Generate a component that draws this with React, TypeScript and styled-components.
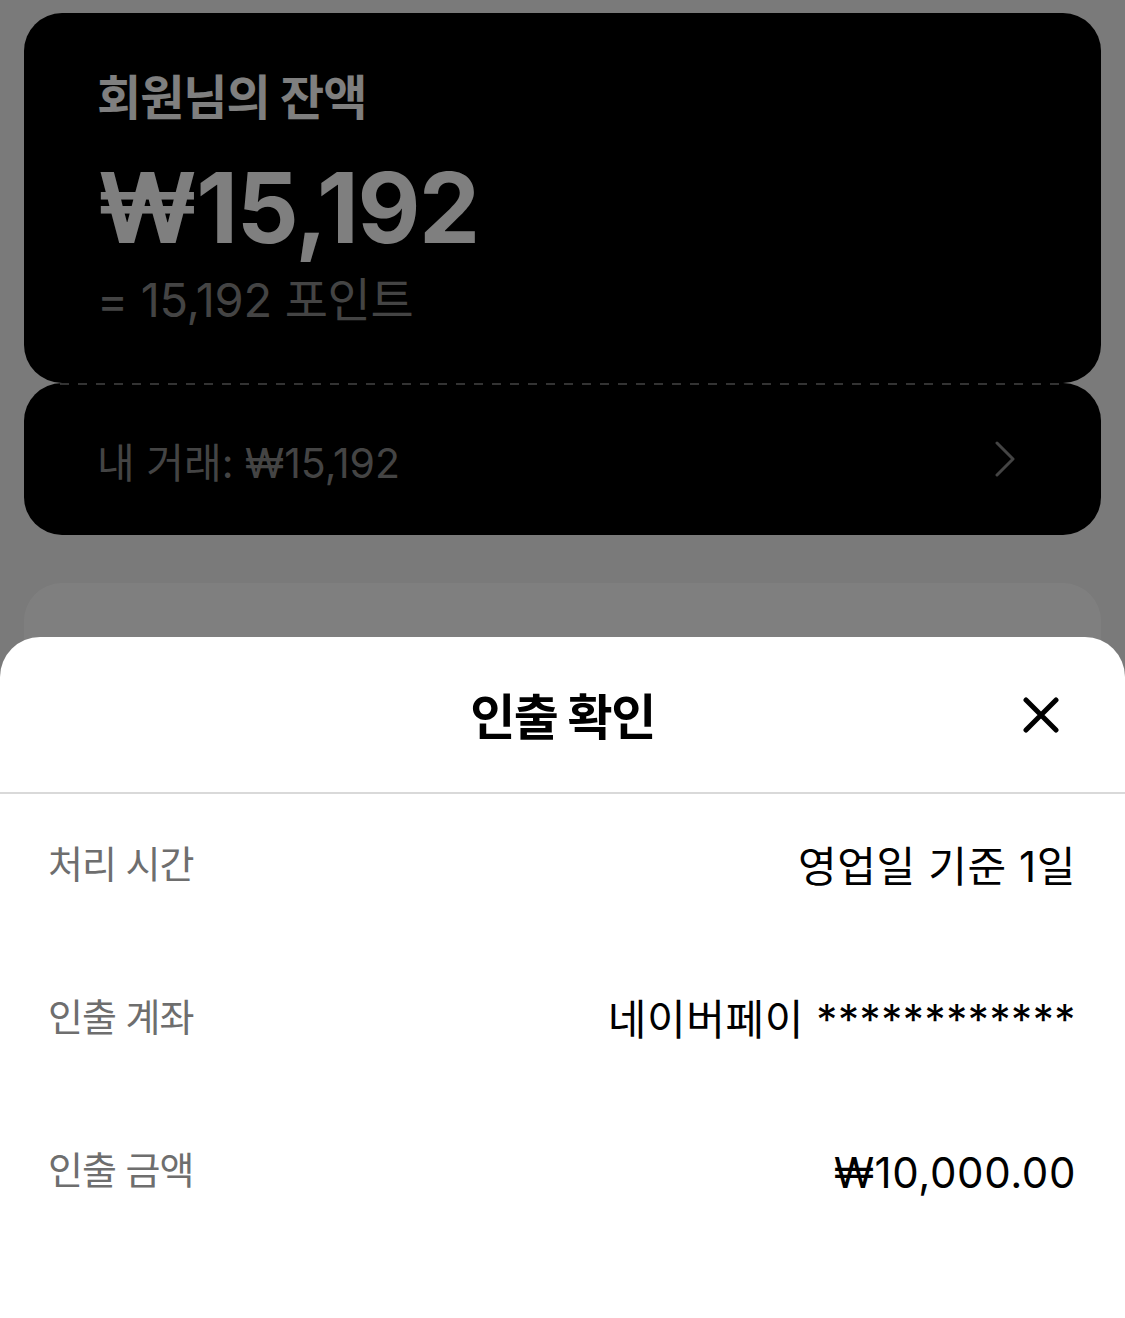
import React from "react";
import styled, { createGlobalStyle } from "styled-components";

const GlobalStyle = createGlobalStyle`
  html, body {
    margin: 0;
    padding: 0;
    background: #f4f4f4;
    font-family: Inter, "Noto Sans CJK KR", "Noto Sans", sans-serif;
    -webkit-font-smoothing: antialiased;
  }
  * { box-sizing: border-box; }
`;

const Page = styled.main`
  width: 1125px;
  height: 1318px;
  overflow: hidden;
  padding: 13px 24px 0;
  display: flex;
  flex-direction: column;
`;

const BalanceCard = styled.section`
  height: 370px;
  background: #000;
  border-radius: 38px;
  padding: 57px 73px 0;
  display: flex;
  flex-direction: column;
`;

const BalanceTitle = styled.h2`
  margin: 0;
  font-size: 48px;
  line-height: 56px;
  font-weight: 700;
  letter-spacing: -1px;
  color: #ffffff;
`;

const BalanceAmount = styled.div`
  margin-top: 32px;
  font-size: 97px;
  line-height: 100px;
  font-weight: 700;
  letter-spacing: -1.5px;
  color: #ffffff;
`;

const PointLine = styled.div`
  margin-top: 14px;
  font-size: 47px;
  line-height: 56px;
  font-weight: 400;
  letter-spacing: -0.3px;
  color: #888888;
`;

const TxCard = styled.button`
  all: unset;
  height: 152px;
  background:
    repeating-linear-gradient(90deg, #666 0 9px, transparent 9px 18px) top 0 left 36px / calc(100% - 72px) 2px no-repeat,
    #000;
  border-radius: 38px;
  padding: 0 84px 0 73px;
  display: flex;
  align-items: center;
  justify-content: space-between;
`;

const TxText = styled.span`
  font-size: 41px;
  letter-spacing: 0px;
  color: #888888;
  padding-top: 2px;
`;

const NextCard = styled.section`
  margin-top: 48px;
  height: 600px;
  background: #fff;
  border-radius: 38px;
`;

const Overlay = styled.div`
  position: fixed;
  inset: 0;
  background: rgba(0, 0, 0, 0.5);
`;

const Sheet = styled.div`
  position: fixed;
  left: 0;
  right: 0;
  bottom: 0;
  height: 681px;
  background: #fff;
  border-radius: 40px 40px 0 0;
  display: flex;
  flex-direction: column;
`;

const SheetHeader = styled.header`
  position: relative;
  height: 157px;
  border-bottom: 2px solid #d9d9d9;
  display: flex;
  align-items: center;
  justify-content: center;
`;

const SheetTitle = styled.h1`
  margin: 0;
  margin-top: -2px;
  font-size: 49px;
  font-weight: 700;
  letter-spacing: -1.5px;
  color: #000;
`;

const CloseButton = styled.button`
  all: unset;
  position: absolute;
  right: 66px;
  top: 60px;
  width: 36px;
  height: 36px;
  display: flex;
  align-items: center;
  justify-content: center;
  cursor: pointer;
`;

const Rows = styled.dl`
  margin: 0;
  padding: 44px 49px 0 48px;
  display: flex;
  flex-direction: column;
  gap: 97px;
`;

const Row = styled.div`
  height: 56px;
  display: flex;
  align-items: flex-start;
  justify-content: space-between;
`;

const Label = styled.dt`
  font-size: 38px;
  line-height: 52px;
  letter-spacing: -1px;
  color: #6e6e6e;
`;

const Value = styled.dd`
  margin: 0;
  font-size: 42px;
  line-height: 58px;
  letter-spacing: 0.6px;
  color: #000;
`;

const Chevron = () => (
  <svg width="24" height="36" viewBox="0 0 24 36" fill="none">
    <polyline points="4,2 20,18 4,34" stroke="#888" strokeWidth="3" strokeLinecap="round" strokeLinejoin="round" />
  </svg>
);

const CloseIcon = () => (
  <svg width="36" height="36" viewBox="0 0 36 36" fill="none">
    <path d="M3 3 L33 33 M33 3 L3 33" stroke="#000" strokeWidth="5" strokeLinecap="round" />
  </svg>
);

const rows = [
  { label: "처리 시간", value: "영업일 기준 1일" },
  { label: "인출 계좌", value: "네이버페이 ************" },
  { label: "인출 금액", value: "₩10,000.00" },
];

export default function App() {
  return (
    <>
      <GlobalStyle />
      <Page>
        <BalanceCard>
          <BalanceTitle>회원님의 잔액</BalanceTitle>
          <BalanceAmount>₩15,192</BalanceAmount>
          <PointLine>= 15,192 포인트</PointLine>
        </BalanceCard>
        <TxCard>
          <TxText>내 거래: ₩15,192</TxText>
          <Chevron />
        </TxCard>
        <NextCard />
      </Page>
      <Overlay />
      <Sheet role="dialog" aria-label="인출 확인">
        <SheetHeader>
          <SheetTitle>인출 확인</SheetTitle>
          <CloseButton aria-label="닫기">
            <CloseIcon />
          </CloseButton>
        </SheetHeader>
        <Rows>
          {rows.map((r) => (
            <Row key={r.label}>
              <Label>{r.label}</Label>
              <Value>{r.value}</Value>
            </Row>
          ))}
        </Rows>
      </Sheet>
    </>
  );
}
